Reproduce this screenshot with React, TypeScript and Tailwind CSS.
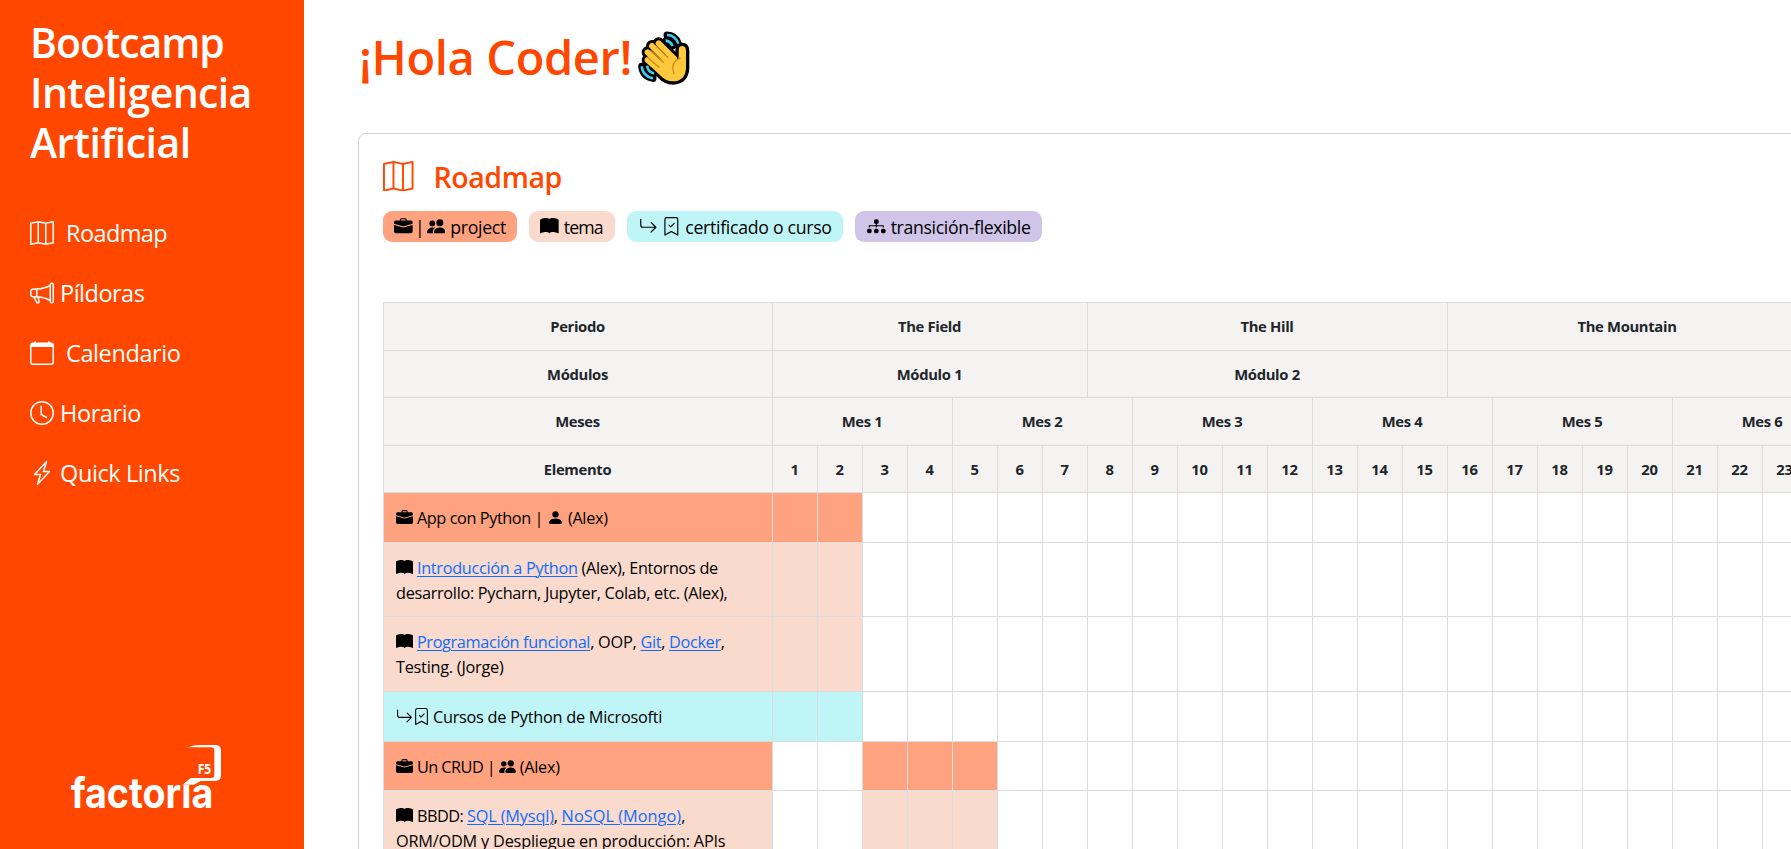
import type { ReactNode } from "react";
import {
  BsArrowReturnRight,
  BsBookFill,
  BsBookmarkCheck,
  BsBriefcaseFill,
  BsCalendar,
  BsClock,
  BsDiagram3Fill,
  BsLightningCharge,
  BsMap,
  BsMegaphone,
  BsPeopleFill,
  BsPersonFill,
} from "react-icons/bs";

const WEEKS = 28;

const menu = [
  { icon: BsMap, label: "Roadmap", style: "ml-[12px] tracking-[-0.6px]" },
  { icon: BsMegaphone, label: "Píldoras", style: "ml-[6px] tracking-[-0.5px]" },
  { icon: BsCalendar, label: "Calendario", style: "ml-[12px] tracking-[-0.4px]" },
  { icon: BsClock, label: "Horario", style: "ml-[6px] tracking-[-0.4px]" },
  { icon: BsLightningCharge, label: "Quick Links", style: "ml-[6px] tracking-[-0.4px]" },
];

const periods = [
  { label: "The Field", span: "col-span-7" },
  { label: "The Hill", span: "col-span-8" },
  { label: "The Mountain", span: "col-span-8" },
  { label: "", span: "col-span-5" },
];

const modules = [
  { label: "Módulo 1", span: "col-span-7" },
  { label: "Módulo 2", span: "col-span-8" },
  { label: "", span: "col-span-13" },
];

const months = [1, 2, 3, 4, 5, 6, 7].map((n) => ({ label: `Mes ${n}`, span: "col-span-4" }));
const weeks = Array.from({ length: WEEKS }, (_, i) => ({ label: `${i + 1}`, span: "col-span-1" }));

const icon = "inline-block size-[17px] align-[-2px]";

function Link({ children, track = "" }: { children: ReactNode; track?: string }) {
  return (
    <a href="#" className={`text-[#0d6efd] underline decoration-1 underline-offset-2 ${track}`}>
      {children}
    </a>
  );
}

const PROJECT = "bg-[#ffa27f]";
const TOPIC = "bg-[#f9dacd]";
const COURSE = "bg-[#c0f5f8]";

const rows: { height: string; color: string; from: number; to: number; content: ReactNode }[] = [
  {
    height: "h-[50px]",
    color: PROJECT,
    from: 1,
    to: 2,
    content: (
      <>
        <BsBriefcaseFill className={icon} /> <span className="tracking-[-0.42px]">App con Python | </span>
        <BsPersonFill className={icon} /> (Alex)
      </>
    ),
  },
  {
    height: "h-[74px]",
    color: TOPIC,
    from: 1,
    to: 2,
    content: (
      <>
        <BsBookFill className={icon} /> <Link>Introducción a Python</Link> (Alex), Entornos de
        <br />
        desarrollo: Pycharn, Jupyter, Colab, etc. (Alex),
      </>
    ),
  },
  {
    height: "h-[75px]",
    color: TOPIC,
    from: 1,
    to: 2,
    content: (
      <>
        <BsBookFill className={icon} /> <Link track="tracking-[-0.36px]">Programación funcional</Link>,{" "}
        <span className="tracking-[-0.2px]">OOP, </span>
        <Link track="tracking-[-0.35px]">Git</Link>, <Link track="tracking-[-0.35px]">Docker</Link>,
        <br />
        <span className="tracking-[-0.25px]">Testing. (Jorge)</span>
      </>
    ),
  },
  {
    height: "h-[50px]",
    color: COURSE,
    from: 1,
    to: 2,
    content: (
      <>
        <BsArrowReturnRight className={icon} />
        <BsBookmarkCheck className={`${icon} mr-[-1px]`} /> <span className="tracking-[-0.25px]">Cursos de Python de Microsofti</span>
      </>
    ),
  },
  {
    height: "h-[49px]",
    color: PROJECT,
    from: 3,
    to: 5,
    content: (
      <>
        <BsBriefcaseFill className={icon} /> <span className="tracking-[-0.55px]">Un CRUD | </span>
        <BsPeopleFill className={icon} /> (Alex)
      </>
    ),
  },
  {
    height: "h-[75px]",
    color: TOPIC,
    from: 3,
    to: 5,
    content: (
      <>
        <BsBookFill className={icon} /> <span className="tracking-[-0.5px]">BBDD: </span>
        <Link track="tracking-[-0.17px]">SQL (Mysql)</Link>, <Link track="tracking-[0.04px]">NoSQL (Mongo)</Link>,
        <br />
        <span className="tracking-[-0.2px]">ORM/ODM y Despliegue en producción: APIs</span>
      </>
    ),
  },
];

function HeaderRow({ title, height, cells }: { title: string; height: string; cells: { label: string; span: string }[] }) {
  const cell = `flex items-center justify-center border-r border-b border-[#dcdcdc] bg-[#f4f3f2] pr-px ${height}`;
  return (
    <>
      <div className={cell}>{title}</div>
      {cells.map((c, i) => (
        <div key={i} className={`${cell} ${c.span}`}>
          {c.label}
        </div>
      ))}
    </>
  );
}

function WavingHand() {
  const fingers = "M86 58 L132 104 M66 66 L118 118 M53 85 L106 134 M53 108 L98 148";
  const palm =
    "M146 104 V79 Q146 66 157 66 Q168 67 168 80 V131 Q166 171 129 172 Q108 172 92 155 L70 132 L110 90 L136 106 Z";
  const waves = "M111 33 Q136 33 145 59 M107 50 Q121 51 128 66 M35 127 Q38 157 69 163 M51 125 Q54 145 72 148";
  return (
    <svg viewBox="0 0 198 204" className="h-[68px] w-[66px]" fill="none" strokeLinecap="round" strokeLinejoin="round">
      <path d={waves} stroke="#000" strokeWidth="21" />
      <path d={fingers} stroke="#000" strokeWidth="36" />
      <path d={palm} fill="#000" stroke="#000" strokeWidth="20" />
      <path d={waves} stroke="#3bcdf5" strokeWidth="8" strokeLinecap="butt" />
      <path d={fingers} stroke="#ffc83d" strokeWidth="18" />
      <path d={palm} fill="#ffc83d" />
      <path d="M80 67 L113 100 M63 80 L100 115 M52 100 L87 130" stroke="#d0881a" strokeWidth="4" />
      <path d="M150 103 Q120 115 132 149" stroke="#d0881a" strokeWidth="4" />
    </svg>
  );
}

function Logo() {
  return (
    <svg viewBox="0 0 660 387" className="h-[129px] w-[220px]" fill="#fff">
      <text x="92" y="265" fontSize="125" textLength="428" lengthAdjust="spacingAndGlyphs" className="font-['Inter'] font-bold">
        factorıa
      </text>
      <path d="M443 82 Q460 75 482 75 H526 Q543 75 543 92 V166 Q543 183 526 183 H482 L462 194 H428 L452 174 H514 Q523 174 523 165 V92 Q523 82 513 82 Z" />
      <text x="473" y="163" fontSize="41" textLength="41" lengthAdjust="spacingAndGlyphs" className="font-['Open_Sans'] font-bold">
        F5
      </text>
    </svg>
  );
}

export default function App() {
  const pill = "flex h-[31px] items-center rounded-[9px] whitespace-pre";
  const pillIcon = "size-[18.67px] shrink-0";
  return (
    <div className="flex h-[849px] w-full overflow-hidden bg-white font-['Open_Sans',sans-serif] text-black">
      <aside className="flex w-[304px] shrink-0 flex-col bg-[#ff4700] pt-[17px] text-white">
        <h1 className="ml-[30px] text-[41px] leading-[50px] font-semibold">
          <span className="block tracking-[-1.03px]">Bootcamp</span>
          <span className="block tracking-[-0.62px]">Inteligencia</span>
          <span className="block tracking-[-0.51px]">Artificial</span>
        </h1>
        <nav className="mt-[36px] ml-[30px] flex flex-col text-[23.5px]">
          {menu.map(({ icon: Icon, label, style }) => (
            <a key={label} href="#" className="flex h-[60px] items-center">
              <Icon className="size-6" />
              <span className={`pt-[2px] ${style}`}>{label}</span>
            </a>
          ))}
        </nav>
        <div className="mt-auto ml-10">
          <Logo />
        </div>
      </aside>

      <main className="w-0 grow pl-[54px]">
        <header className="flex h-[133px] items-start">
          <h2 className="mt-[27px] ml-px text-[47px] leading-[60px] font-semibold tracking-[-0.38px] whitespace-nowrap text-[#ff4700]">
            ¡Hola Coder!
          </h2>
          <div className="mt-6 -ml-[2px]">
            <WavingHand />
          </div>
        </header>

        <section className="w-[1700px] rounded-[8px] border border-[#d2d2d2] px-6 pt-[27px]">
          <div className="flex h-[30px] items-center text-[#ff4700]">
            <BsMap className="size-[30.5px] shrink-0" />
            <h3 className="mt-[2px] ml-[20px] text-[28.5px] leading-[30px] font-semibold tracking-[-0.43px]">Roadmap</h3>
          </div>

          <div className="mt-5 flex gap-3 text-[17.7px] tracking-[-0.33px]">
            <div className={`${pill} w-[134px] bg-[#ffa27f] pl-[11px]`}>
              <BsBriefcaseFill className={pillIcon} />
              <span className="w-[14px] pt-[2px] text-center">|</span>
              <BsPeopleFill className={pillIcon} />
              <span className="pt-[2px] pl-[5px]">project</span>
            </div>
            <div className={`${pill} w-[86px] bg-[#f9dacd] pl-[11px]`}>
              <BsBookFill className={pillIcon} />
              <span className="pt-[2px] pl-[5px] tracking-[-0.8px]">tema</span>
            </div>
            <div className={`${pill} w-[216px] bg-[#c0f5f8] pl-[12px]`}>
              <BsArrowReturnRight className={pillIcon} />
              <BsBookmarkCheck className={`${pillIcon} ml-[4px]`} />
              <span className="pt-[2px] pl-[5px] tracking-[-0.3px]">certificado o curso</span>
            </div>
            <div className={`${pill} w-[187px] bg-[#d0c4e8] pl-[12px]`}>
              <BsDiagram3Fill className={pillIcon} />
              <span className="pt-[2px] pl-[5px] tracking-[-0.35px]">transición-flexible</span>
            </div>
          </div>

          <div className="mt-[60px] grid w-max grid-cols-[389px_repeat(28,45px)] border-t border-l border-[#dcdcdc]">
            <div className="contents text-[14.8px] font-bold tracking-[-0.33px] text-[#212529]">
              <HeaderRow title="Periodo" height="h-[48px]" cells={periods} />
              <HeaderRow title="Módulos" height="h-[47px]" cells={modules} />
              <HeaderRow title="Meses" height="h-[48px]" cells={months} />
              <HeaderRow title="Elemento" height="h-[47px]" cells={weeks} />
            </div>
            {rows.map((row, r) => (
              <div key={r} className="contents text-[16.3px] leading-[25px] tracking-[-0.31px]">
                <div className={`border-r border-b border-[#dcdcdc] px-3 pt-[13px] whitespace-nowrap ${row.height} ${row.color}`}>
                  {row.content}
                </div>
                {weeks.map((w, i) => (
                  <div
                    key={w.label}
                    className={`border-r border-b border-[#dcdcdc] ${i + 1 >= row.from && i + 1 <= row.to ? row.color : "bg-white"}`}
                  />
                ))}
              </div>
            ))}
          </div>
        </section>
      </main>
    </div>
  );
}
